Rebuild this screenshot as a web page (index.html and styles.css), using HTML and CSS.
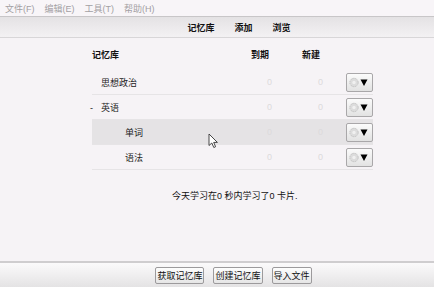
FILE: index.html
```html
<!DOCTYPE html>
<html lang="zh">
<head>
    <meta charset="UTF-8">
    <title>记忆库</title>
    <link rel="stylesheet" href="styles.css">
</head>
<body>
    <div class="menubar">
        <span>文件(F)</span>
        <span>编辑(E)</span>
        <span>工具(T)</span>
        <span>帮助(H)</span>
    </div>

    <div class="toolbar">
        <a href="#">记忆库</a>
        <a href="#">添加</a>
        <a href="#">浏览</a>
    </div>

    <main class="deck-page">
        <div class="deck-table">
            <div class="deck-head">
                <span>记忆库</span>
                <span class="num">到期</span>
                <span class="num">新建</span>
                <span></span>
            </div>

            <div class="deck-row">
                <span class="name">思想政治</span>
                <span class="num zero">0</span>
                <span class="num zero">0</span>
                <button class="gear-btn"><svg width="20" height="11" viewBox="0 0 20 11"><circle cx="5" cy="5.5" r="4.2" fill="#dcdcdc" stroke="#c2c2c2" stroke-width="1" stroke-dasharray="1.4 0.8"/><circle cx="5" cy="5.5" r="1.7" fill="#f0f0f0"/><path d="M11.5 2.5 L18.5 2.5 L15 9 Z" fill="#000"/></svg></button>
            </div>
            <div class="deck-row">
                <span class="name"><span class="toggle">-</span>英语</span>
                <span class="num zero">0</span>
                <span class="num zero">0</span>
                <button class="gear-btn"><svg width="20" height="11" viewBox="0 0 20 11"><circle cx="5" cy="5.5" r="4.2" fill="#dcdcdc" stroke="#c2c2c2" stroke-width="1" stroke-dasharray="1.4 0.8"/><circle cx="5" cy="5.5" r="1.7" fill="#f0f0f0"/><path d="M11.5 2.5 L18.5 2.5 L15 9 Z" fill="#000"/></svg></button>
            </div>
            <div class="deck-row current">
                <span class="name child">单词</span>
                <span class="num zero">0</span>
                <span class="num zero">0</span>
                <button class="gear-btn"><svg width="20" height="11" viewBox="0 0 20 11"><circle cx="5" cy="5.5" r="4.2" fill="#dcdcdc" stroke="#c2c2c2" stroke-width="1" stroke-dasharray="1.4 0.8"/><circle cx="5" cy="5.5" r="1.7" fill="#f0f0f0"/><path d="M11.5 2.5 L18.5 2.5 L15 9 Z" fill="#000"/></svg></button>
            </div>
            <div class="deck-row">
                <span class="name child">语法</span>
                <span class="num zero">0</span>
                <span class="num zero">0</span>
                <button class="gear-btn"><svg width="20" height="11" viewBox="0 0 20 11"><circle cx="5" cy="5.5" r="4.2" fill="#dcdcdc" stroke="#c2c2c2" stroke-width="1" stroke-dasharray="1.4 0.8"/><circle cx="5" cy="5.5" r="1.7" fill="#f0f0f0"/><path d="M11.5 2.5 L18.5 2.5 L15 9 Z" fill="#000"/></svg></button>
            </div>
        </div>

        <p class="stats">今天学习在0 秒内学习了0 卡片.</p>

        <svg class="cursor" width="11" height="16" viewBox="0 0 11 16">
            <path d="M1 1 L1 12.5 L3.8 10 L5.8 14.5 L7.6 13.7 L5.7 9.4 L9.4 9.4 Z" fill="#fff" stroke="#333" stroke-width="0.9" stroke-linejoin="round"/>
        </svg>
    </main>

    <footer class="bottombar">
        <button class="btn">获取记忆库</button>
        <button class="btn">创建记忆库</button>
        <button class="btn">导入文件</button>
    </footer>
</body>
</html>
```

FILE: styles.css
```css
/* General Styling */
html, body {
    height: 100%;
}

body {
    margin: 0;
    padding: 0;
    display: flex;
    flex-direction: column;
    font-family: "Liberation Sans", "Noto Sans CJK SC", sans-serif;
    font-size: 9px;
    color: #222;
    background-color: #f6f3f6;
    overflow: hidden;
}

/* Menu bar */
.menubar {
    height: 16px;
    display: flex;
    align-items: center;
    gap: 10px;
    padding-left: 5px;
    color: #a3a0a3;
    background-color: #f8f5f8;
}

/* Top toolbar */
.toolbar {
    height: 20px;
    display: flex;
    justify-content: center;
    align-items: center;
    gap: 20px;
    padding-left: 44px;
    border-top: 1px solid #c8c6c8;
    border-bottom: 1px solid #d8d6d8;
    background: linear-gradient(to bottom, #e4e2e4, #f3f1f3);
}

.toolbar a {
    color: #111;
    font-weight: bold;
    text-decoration: none;
}

/* Deck list */
.deck-page {
    flex: 1;
    position: relative;
    padding-top: 7px;
}

.deck-table {
    width: 281px;
    margin-left: 92px;
}

.deck-head,
.deck-row {
    display: grid;
    grid-template-columns: 155px 26px 51px 1fr;
    align-items: center;
}

.deck-head {
    height: 18px;
    font-weight: bold;
    color: #111;
    margin-bottom: 7px;
}

.deck-head .num {
    padding-right: 4px;
}

.deck-row {
    height: 24px;
    border-bottom: 1px solid #e6e4e6;
}

.deck-row.current {
    background-color: #e5e3e5;
}

.num {
    text-align: right;
}

.zero {
    color: #dcdadc;
    padding-right: 1px;
}

.name {
    padding-left: 9px;
}

.name.child {
    padding-left: 33px;
}

.toggle {
    display: inline-block;
    width: 9px;
    margin-left: -11px;
    margin-right: 2px;
}

.gear-btn {
    justify-self: end;
    width: 27px;
    height: 19px;
    padding: 0 0 0 2px;
    display: flex;
    align-items: center;
    border: 1px solid #a9a7a9;
    border-radius: 2px;
    background: linear-gradient(to bottom, #fbfbfb, #e2e2e2);
}

.stats {
    margin: 17px 0 0;
    line-height: 18px;
    padding-left: 172px;
    color: #111;
}

.cursor {
    position: absolute;
    left: 208px;
    top: 95px;
}

/* Bottom bar */
.bottombar {
    height: 24px;
    display: flex;
    justify-content: center;
    align-items: center;
    gap: 9px;
    padding-left: 33px;
    border-top: 2px solid #cfcdcf;
    background: linear-gradient(to bottom, #fbfafb, #e4e3e4);
}

.btn {
    height: 17px;
    padding: 0 1px;
    font-family: "Liberation Sans", "Noto Sans CJK SC", sans-serif;
    font-size: 9px;
    color: #111;
    border: 1px solid #9c9a9c;
    border-radius: 2px;
    background: linear-gradient(to bottom, #fdfdfd, #e6e6e6);
}
```
